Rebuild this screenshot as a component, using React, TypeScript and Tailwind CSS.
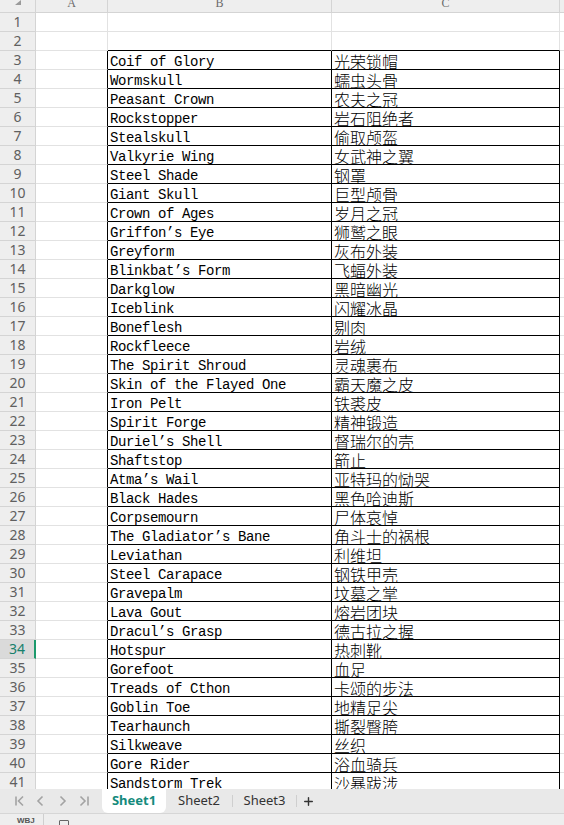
import React from 'react';
import { Plus } from 'lucide-react';

// armour names, English / Chinese, rows 3..41
const items: [string, string][] = [
  ['Coif of Glory', '光荣锁帽'],
  ['Wormskull', '蠕虫头骨'],
  ['Peasant Crown', '农夫之冠'],
  ['Rockstopper', '岩石阻绝者'],
  ['Stealskull', '偷取颅盔'],
  ['Valkyrie Wing', '女武神之翼'],
  ['Steel Shade', '钢罩'],
  ['Giant Skull', '巨型颅骨'],
  ['Crown of Ages', '岁月之冠'],
  ['Griffon’s Eye', '狮鹫之眼'],
  ['Greyform', '灰布外装'],
  ['Blinkbat’s Form', '飞蝠外装'],
  ['Darkglow', '黑暗幽光'],
  ['Iceblink', '闪耀冰晶'],
  ['Boneflesh', '剔肉'],
  ['Rockfleece', '岩绒'],
  ['The Spirit Shroud', '灵魂裹布'],
  ['Skin of the Flayed One', '霸天魔之皮'],
  ['Iron Pelt', '铁裘皮'],
  ['Spirit Forge', '精神锻造'],
  ['Duriel’s Shell', '督瑞尔的壳'],
  ['Shaftstop', '箭止'],
  ['Atma’s Wail', '亚特玛的恸哭'],
  ['Black Hades', '黑色哈迪斯'],
  ['Corpsemourn', '尸体哀悼'],
  ['The Gladiator’s Bane', '角斗士的祸根'],
  ['Leviathan', '利维坦'],
  ['Steel Carapace', '钢铁甲壳'],
  ['Gravepalm', '坟墓之掌'],
  ['Lava Gout', '熔岩团块'],
  ['Dracul’s Grasp', '德古拉之握'],
  ['Hotspur', '热刺靴'],
  ['Gorefoot', '血足'],
  ['Treads of Cthon', '卡颂的步法'],
  ['Goblin Toe', '地精足尖'],
  ['Tearhaunch', '撕裂臀胯'],
  ['Silkweave', '丝织'],
  ['Gore Rider', '浴血骑兵'],
  ['Sandstorm Trek', '沙暴跋涉'],
];

const ACTIVE_ROW = 34;

const RowHeader: React.FC<{ n: number }> = ({ n }) =>
  n === ACTIVE_ROW ? (
    <div className="w-[36px] shrink-0 border-b border-r-2 border-b-[#d4d4d4] border-r-[#1c9a6c] bg-[#dadada] flex items-center justify-center text-[14px] text-[#17806c] font-['Noto_Sans',sans-serif] leading-none">
      {n}
    </div>
  ) : (
    <div className="w-[36px] shrink-0 border-b border-r border-[#d4d4d4] bg-[#eeeeee] flex items-center justify-center text-[14px] text-[#606060] font-['Noto_Sans',sans-serif] leading-none">
      {n}
    </div>
  );

const EmptyRow: React.FC<{ n: number; closeTop?: boolean }> = ({ n, closeTop }) => (
  <div className="h-[19px] flex">
    <RowHeader n={n} />
    <div className="w-[72px] shrink-0 border-b border-r border-[#e2e2e2]" />
    <div
      className={
        closeTop
          ? 'w-[224px] shrink-0 border-r border-r-[#e2e2e2] border-b border-b-black'
          : 'w-[224px] shrink-0 border-b border-r border-[#e2e2e2]'
      }
    />
    <div
      className={
        closeTop
          ? 'w-[228px] shrink-0 border-r border-r-[#e2e2e2] border-b border-b-black'
          : 'w-[228px] shrink-0 border-b border-r border-[#e2e2e2]'
      }
    />
    <div className="flex-1 border-b border-[#e2e2e2]" />
  </div>
);

const ItemRow: React.FC<{ n: number; en: string; zh: string }> = ({ n, en, zh }) => (
  <div className="h-[19px] flex">
    <RowHeader n={n} />
    <div className="w-[72px] shrink-0 border-b border-b-[#e2e2e2] border-r border-r-black" />
    <div className="w-[224px] shrink-0 border-b border-r border-black flex items-end pl-[2px] pb-[1px]">
      <span className="font-['Liberation_Mono',monospace] text-[14px] tracking-[-0.4px] leading-[13px] translate-y-[1px] text-black whitespace-pre">
        {en}
      </span>
    </div>
    <div className="w-[228px] shrink-0 border-b border-r border-black flex items-end pl-[2px]">
      <span className="font-['Noto_Sans_CJK_SC',sans-serif] font-light text-[16px] leading-[16px] text-black whitespace-pre">
        {zh}
      </span>
    </div>
    <div className="flex-1 border-b border-[#e2e2e2]" />
  </div>
);

const NavArrows = () => (
  <div className="w-[102px] shrink-0 flex items-center">
    <svg width="102" height="12" viewBox="0 0 102 12" fill="none" stroke="#a3a3a3" strokeWidth="1.6">
      <path d="M16 1.5v9" />
      <path d="M23 1.5l-4.5 4.5 4.5 4.5" />
      <path d="M42.5 1.5L38 6l4.5 4.5" />
      <path d="M60.5 1.5L65 6l-4.5 4.5" />
      <path d="M80.5 1.5L85 6l-4.5 4.5" />
      <path d="M88 1.5v9" />
    </svg>
  </div>
);

export default function App() {
  const rows = items.map((it, i) => ({ n: i + 3, en: it[0], zh: it[1] }));

  return (
    <div className="w-[564px] h-[825px] overflow-hidden bg-white flex flex-col select-none">
      <div className="h-[789px] shrink-0 overflow-hidden">
        {/* column letters */}
        <div className="h-[13px] flex bg-[#eeeeee] border-b border-[#d4d4d4] overflow-hidden">
          <div className="w-[36px] shrink-0 border-r border-[#d4d4d4] flex items-start">
            <svg width="8" height="6" viewBox="0 0 8 6" className="ml-[14px]">
              <path d="M7 0v5H1z" fill="#9a9a9a" />
            </svg>
          </div>
          {[
            ['A', 'w-[72px]'],
            ['B', 'w-[224px]'],
            ['C', 'w-[228px]'],
          ].map(([l, w]) => (
            <div key={l} className={`${w} shrink-0 border-r border-[#d4d4d4] flex justify-center items-start`}>
              <span className="-mt-[3px] font-['Liberation_Serif',serif] text-[12px] leading-[12px] text-[#6a6a6a]">
                {l}
              </span>
            </div>
          ))}
          <div className="flex-1" />
        </div>

        <EmptyRow n={1} />
        <EmptyRow n={2} closeTop />
        {rows.map((r) => (
          <ItemRow key={r.n} n={r.n} en={r.en} zh={r.zh} />
        ))}
      </div>

      {/* sheet tabs */}
      <div className="h-[25px] shrink-0 flex items-stretch bg-[#e9e9e9] border-b border-[#d6d6d6] font-['Noto_Sans',sans-serif] text-[13px]">
        <NavArrows />
        <div className="w-[64px] shrink-0 bg-white rounded-b-[6px] flex items-center justify-center font-bold text-[#148a7c]">
          Sheet1
        </div>
        <div className="w-[66px] shrink-0 flex items-center justify-center text-[#333]">Sheet2</div>
        <div className="w-px my-[6px] bg-[#cfcfcf]" />
        <div className="w-[63px] shrink-0 flex items-center justify-center text-[#333]">Sheet3</div>
        <div className="w-px my-[6px] bg-[#cfcfcf]" />
        <div className="pl-[5px] flex items-center">
          <Plus size={13} strokeWidth={2.6} color="#333" />
        </div>
      </div>

      {/* status bar */}
      <div className="flex-1 bg-[#eeeeee] flex items-start">
        <div className="w-[44px] shrink-0 pl-[17px] pt-[3px] border-r border-[#cfcfcf] h-full">
          <span className="block font-['Liberation_Sans',sans-serif] text-[8px] font-bold leading-[8px] text-[#555]">WBJ</span>
        </div>
        <div className="ml-[15px] mt-[6px] w-[10px] h-[8px] border border-[#666] rounded-[1px]" />
      </div>
    </div>
  );
}
